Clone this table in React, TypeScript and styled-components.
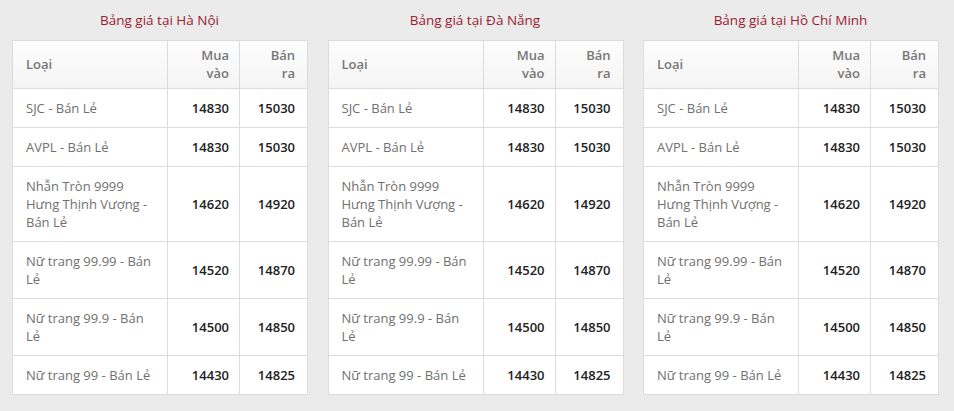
import styled, { createGlobalStyle } from 'styled-components';

const GlobalStyle = createGlobalStyle`
    body {
        margin: 0;
        background: #ebebeb;
        font-family: "Open Sans", "Noto Sans", Arial, sans-serif;
    }
`

const Page = styled.div`
    display: grid;
    grid-template-columns: repeat(3, 295px);
    column-gap: 20.5px;
    padding: 0 0 0 12px;
`

const Block = styled.section`
    display: flex;
    flex-direction: column;
`

const Title = styled.h3`
    margin: 0;
    height: 40px;
    line-height: 40px;
    text-align: center;
    font-size: 13.5px;
    font-weight: 400;
    color: #9b1b30;
`

const Table = styled.table`
    width: 295px;
    border-collapse: collapse;
    table-layout: fixed;
    background: #fff;
    border: 1px solid #dcdcdc;
    font-size: 13px;
    line-height: 18px;
`

const HeadCell = styled.th<{ $align?: string; $pr?: number }>`
    padding: 5px ${({ $pr }) => $pr ?? 10}px 6px ${({ $align }) => ($align === 'right' ? 22 : 13)}px;
    text-align: ${({ $align }) => $align || 'left'};
    font-weight: 600;
    color: #777;
    background: linear-gradient(#fdfdfd, #f4f4f4);
    border: 1px solid #dcdcdc;
`

const NameCell = styled.td`
    padding: 10px 10px 10px 13px;
    color: #707070;
    border: 1px solid #dcdcdc;
`

const PriceCell = styled.td<{ $pr?: number }>`
    padding: 10px ${({ $pr }) => $pr ?? 10}px 10px 6px;
    text-align: right;
    font-weight: 600;
    color: #222;
    border: 1px solid #dcdcdc;
`

const rows = [
    ['SJC - Bán Lẻ', '14830', '15030'],
    ['AVPL - Bán Lẻ', '14830', '15030'],
    ['Nhẫn Tròn 9999 Hưng Thịnh Vượng - Bán Lẻ', '14620', '14920'],
    ['Nữ trang 99.99 - Bán Lẻ', '14520', '14870'],
    ['Nữ trang 99.9 - Bán Lẻ', '14500', '14850'],
    ['Nữ trang 99 - Bán Lẻ', '14430', '14825'],
]

const cities = ['Hà Nội', 'Đà Nẵng', 'Hồ Chí Minh']

const PriceTable = ({ city }: { city: string }) => (
    <Block>
        <Title>Bảng giá tại {city}</Title>
        <Table>
            <colgroup>
                <col style={{ width: 155 }} />
                <col style={{ width: 72 }} />
                <col style={{ width: 68 }} />
            </colgroup>
            <thead>
                <tr>
                    <HeadCell>Loại</HeadCell>
                    <HeadCell $align="right">Mua vào</HeadCell>
                    <HeadCell $align="right" $pr={12}>Bán ra</HeadCell>
                </tr>
            </thead>
            <tbody>
                {rows.map(([name, buy, sell]) => (
                    <tr key={name}>
                        <NameCell>{name}</NameCell>
                        <PriceCell>{buy}</PriceCell>
                        <PriceCell $pr={12}>{sell}</PriceCell>
                    </tr>
                ))}
            </tbody>
        </Table>
    </Block>
)

export default function App() {
    return (
        <>
            <GlobalStyle />
            <Page>
                {cities.map(c => <PriceTable key={c} city={c} />)}
            </Page>
        </>
    )
}
